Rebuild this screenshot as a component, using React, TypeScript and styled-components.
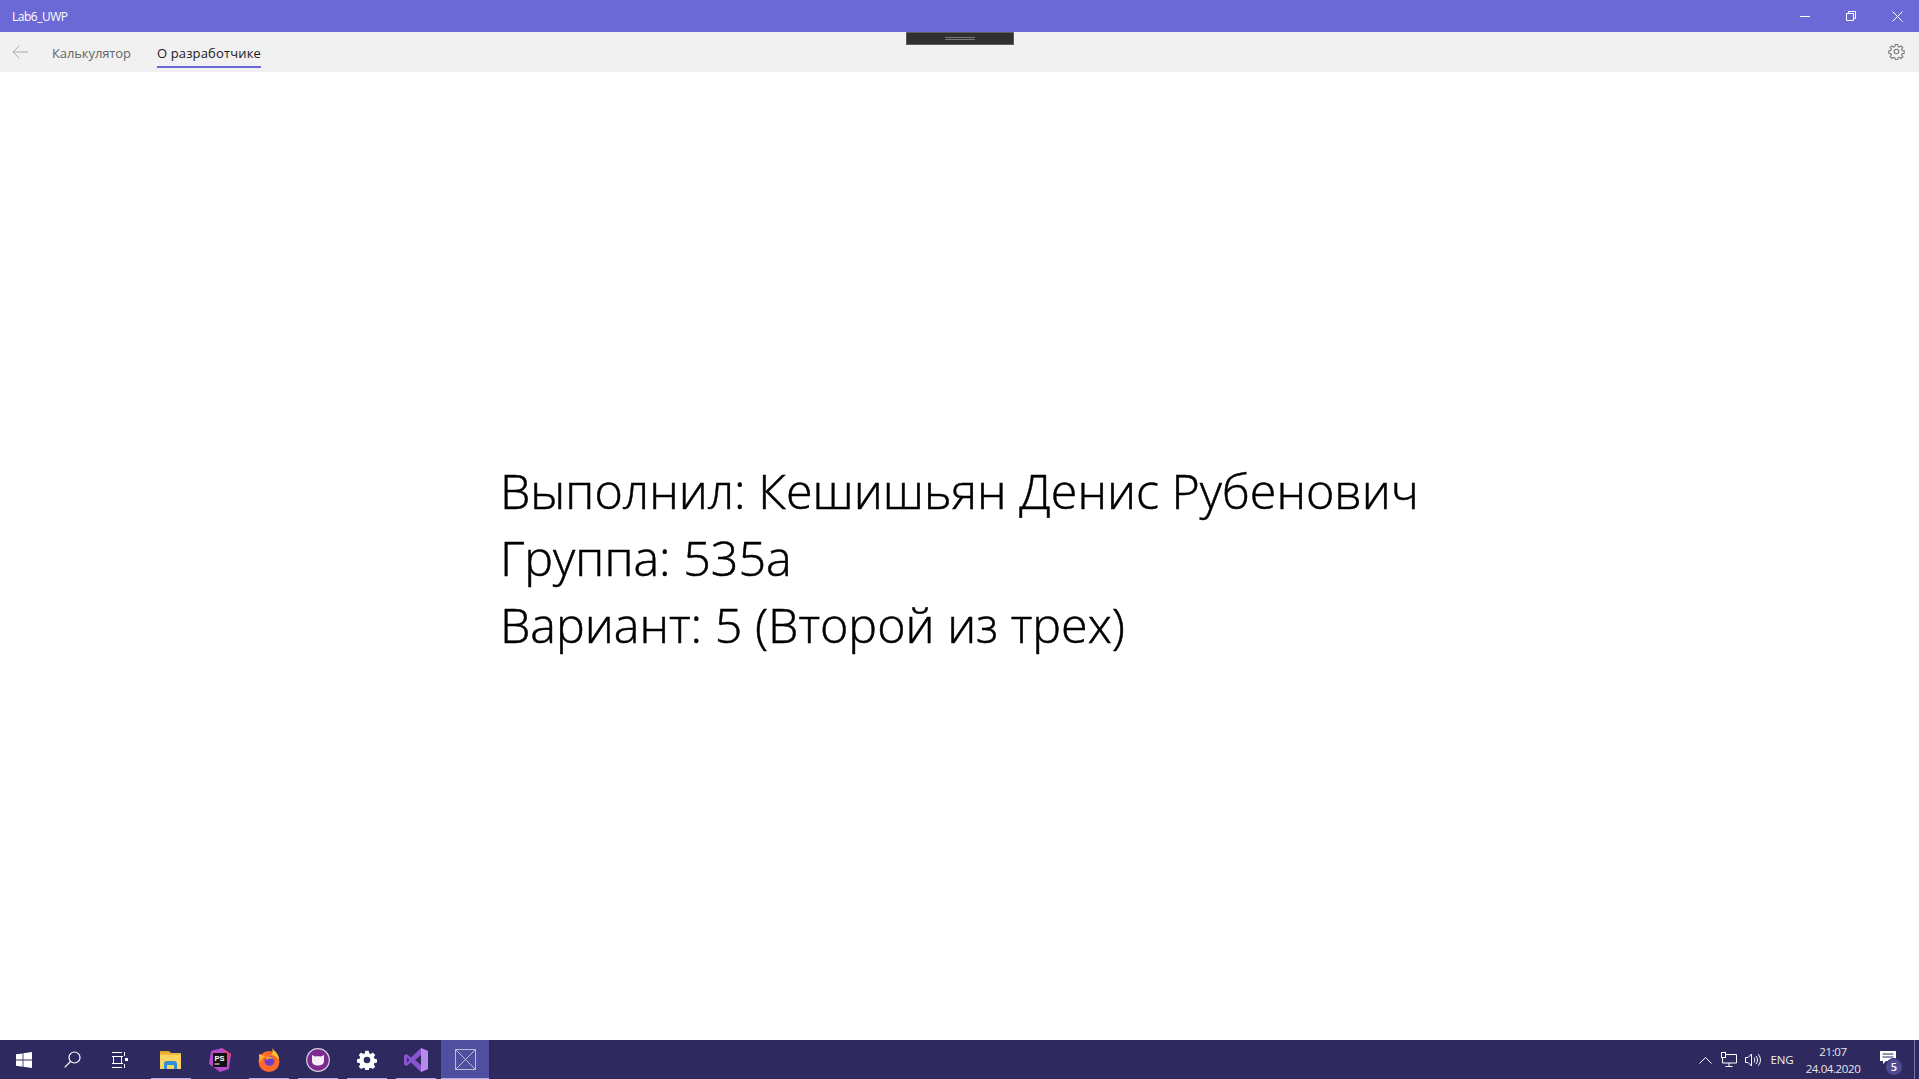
import React from 'react'
import styled, { createGlobalStyle } from 'styled-components'

const GlobalStyle = createGlobalStyle`
  html, body { margin: 0; padding: 0; height: 100%; background: #fff; overflow: hidden; }
  #root { height: 100%; }
`

const Window = styled.div`
  width: 1919px;
  height: 1079px;
  display: flex;
  flex-direction: column;
  font-family: "Open Sans", "Noto Sans", sans-serif;
`

const TitleBar = styled.div`
  height: 32px;
  flex: none;
  background: #6b69d6;
  color: #fff;
  display: flex;
  align-items: center;
  justify-content: space-between;
  padding-left: 12px;
  font-size: 12px;
  letter-spacing: -0.5px;
`

const Caption = styled.div`
  display: flex;
  height: 100%;
  margin-right: -1px;
`

const CaptionButton = styled.div`
  width: 46px;
  display: flex;
  align-items: center;
  justify-content: center;
`

const NavBar = styled.div`
  position: relative;
  height: 40px;
  flex: none;
  background: #f1f1f1;
  display: flex;
  align-items: center;
  padding: 0 14px 0 12px;
`

const BackButton = styled.div`
  width: 16px;
  height: 16px;
  margin-right: 24px;
  display: flex;
`

const NavItem = styled.div<{ $active?: boolean }>`
  height: 100%;
  box-sizing: border-box;
  margin-right: 26px;
  padding-top: 11px;
  font-size: 13px;
  letter-spacing: ${(p) => (p.$active ? '0.15px' : '-0.1px')};
  line-height: 20px;
  color: ${(p) => (p.$active ? '#1a1a1a' : '#666')};
  position: relative;
  &::after {
    content: '';
    display: ${(p) => (p.$active ? 'block' : 'none')};
    position: absolute;
    left: 0;
    right: 0;
    bottom: 4px;
    height: 2px;
    background: #6b69d6;
  }
`

const Spacer = styled.div`
  flex: 1;
`

const Settings = styled.div`
  display: flex;
  margin-top: -2px;
`

const Grip = styled.div`
  position: absolute;
  left: 906px;
  top: 0;
  width: 108px;
  height: 13px;
  box-sizing: border-box;
  background: #2f2f2f;
  border: 1px solid #5c5c5c;
  display: flex;
  flex-direction: column;
  align-items: center;
  justify-content: center;
  gap: 1px;
  &::before, &::after {
    content: '';
    width: 30px;
    height: 1px;
    background: #7a7a7a;
  }
`

const Content = styled.main`
  flex: 1;
  display: flex;
  align-items: center;
  padding-left: 500px;
  background: #fff;
`

const Info = styled.div`
  font-size: 48.4px;
  font-weight: 300;
  line-height: 67px;
  color: #000;
  -webkit-text-stroke: 0.5px #000;
  white-space: nowrap;
  margin-top: 3px;
`

const Taskbar = styled.footer`
  height: 39px;
  flex: none;
  background: #2e2a60;
  display: flex;
  color: #fff;
  font-size: 12px;
`

const TaskButton = styled.div<{ $width?: number; $pinned?: boolean; $active?: boolean; $inset?: number }>`
  width: ${(p) => p.$width ?? 49}px;
  height: 100%;
  box-sizing: border-box;
  padding-right: ${(p) => p.$inset ?? 0}px;
  position: relative;
  display: flex;
  align-items: center;
  justify-content: center;
  background: ${(p) => (p.$active ? '#504f9f' : 'transparent')};
  &::after {
    content: '';
    display: ${(p) => (p.$pinned ? 'block' : 'none')};
    position: absolute;
    left: ${(p) => (p.$active ? 0 : 4)}px;
    right: ${(p) => (p.$active ? 0 : 5)}px;
    bottom: 0;
    height: 1px;
    background: #b3b0f0;
  }
`

const Tray = styled.div`
  margin-left: auto;
  display: flex;
  align-items: center;
  height: 100%;
`

const TrayIcon = styled.div<{ $width: number }>`
  width: ${(p) => p.$width}px;
  display: flex;
  justify-content: center;
`

const Lang = styled.div`
  width: 34px;
  text-align: center;
  font-size: 11.5px;
  letter-spacing: -0.2px;
  color: #f0f0f0;
`

const Clock = styled.div`
  width: 68px;
  text-align: center;
  font-size: 11.5px;
  letter-spacing: -0.4px;
  line-height: 17px;
  color: #e8e8e8;
`

const Notify = styled.div`
  width: 47px;
  height: 100%;
  box-sizing: border-box;
  padding: 0 5px 4px 0;
  position: relative;
  display: flex;
  align-items: center;
  justify-content: center;
`

const Badge = styled.div`
  position: absolute;
  left: 18px;
  top: 18px;
  width: 16px;
  height: 16px;
  border-radius: 50%;
  background: #4b4a92;
  border: 1px solid #2e2a60;
  font-size: 11px;
  font-weight: 600;
  line-height: 16px;
  text-align: center;
  color: #fff;
`

const ShowDesktop = styled.div`
  width: 5px;
  height: 100%;
  box-sizing: border-box;
  border-left: 1px solid #77759f;
`

const App: React.FC = () => {
  return (
    <Window>
      <GlobalStyle />
      <TitleBar>
        <span>Lab6_UWP</span>
        <Caption>
          <CaptionButton>
            <svg width="10" height="10" viewBox="0 0 10 10"><path d="M0 5.5h10" stroke="#fff" fill="none" /></svg>
          </CaptionButton>
          <CaptionButton>
            <svg width="10" height="10" viewBox="0 0 10 10" fill="none" stroke="#fff"><path d="M.5 2.5h7v7h-7zM2.5 2.5v-2h7v7h-2" /></svg>
          </CaptionButton>
          <CaptionButton>
            <svg width="11" height="11" viewBox="0 0 11 11" fill="none" stroke="#fff"><path d="M.5.5l10 10M10.5.5l-10 10" /></svg>
          </CaptionButton>
        </Caption>
      </TitleBar>
      <NavBar>
        <BackButton>
          <svg width="16" height="16" viewBox="0 0 16 16" fill="none" stroke="#aaa"><path d="M16 8H1M7.5 1.5L1 8l6.500 6.500" /></svg>
        </BackButton>
        <NavItem>Калькулятор</NavItem>
        <NavItem $active>О разработчике</NavItem>
        <Spacer />
        <Settings>
          <svg width="17" height="17" viewBox="0 0 24 24" fill="none" stroke="#777" strokeWidth="1.5">
            <circle cx="12" cy="12" r="3.2" />
            <path d="M10.3 2h3.400l.5 2.900 1.900.8 2.400-1.700 2.400 2.400-1.700 2.400.8 1.900 2.900.5v3.400l-2.900.5-.8 1.900 1.700 2.400-2.400 2.400-2.400-1.700-1.900.8-.5 2.900h-3.400l-.5-2.900-1.900-.8-2.400 1.700-2.400-2.400 1.700-2.400-.8-1.900-2.900-.5v-3.400l2.900-.5.8-1.900-1.700-2.400 2.400-2.400 2.400 1.700 1.900-.8z" />
          </svg>
        </Settings>
        <Grip />
      </NavBar>
      <Content>
        <Info>
          Выполнил: Кешишьян Денис Рубенович
          <br />
          Группа: 535а
          <br />
          Вариант: 5 (Второй из трех)
        </Info>
      </Content>
      <Taskbar>
        <TaskButton $width={48}>
          <svg width="16" height="16" viewBox="0 0 16 16" fill="#fff"><path d="M0 2.300l6.600-.9v6.200H0zM7.400 1.300L16 0v7.600H7.400zM0 8.400h6.600v6.300L0 13.800zM7.400 8.400H16V16l-8.600-1.200z" /></svg>
        </TaskButton>
        <TaskButton $width={48}>
          <svg width="17" height="17" viewBox="0 0 17 17" fill="none" stroke="#fff" strokeWidth="1.200"><circle cx="10.500" cy="6.500" r="5.500" /><path d="M6.500 10.500L.7 16.300" /></svg>
        </TaskButton>
        <TaskButton $width={51} $inset={3}>
          <svg width="16" height="16" viewBox="0 0 16 16" fill="none" stroke="#fff"><path d="M0 .5h10M0 15.500h10M1.500 4.500h8v7h-8zM0 4.500h11M0 11.500h11M12.500 0v4M12.500 12v4" /><rect x="13" y="6" width="3" height="3" fill="#fff" stroke="none" /></svg>
        </TaskButton>
        <TaskButton $pinned $inset={2}>
          <svg width="22" height="20" viewBox="0 0 22 20"><path d="M0 1h9l2 2h-11z" fill="#e0a526" /><rect x="0" y="3" width="21" height="16" fill="#fcd462" /><rect x="0" y="3" width="21" height="2" fill="#e8b93f" /><path d="M4 19v-5a3 3 0 0 1 3-3h7a3 3 0 0 1 3 3v5h-3v-4H7v4z" fill="#2f8fd8" /></svg>
        </TaskButton>
        <TaskButton $inset={2}>
          <svg width="24" height="24" viewBox="0 0 24 24"><path d="M3 3l11-3 9 6-2 15-9 3L1 16z" fill="#b74ac9" /><path d="M14 0l9 6-2 6z" fill="#e8407f" /><rect x="5" y="5" width="14" height="14" fill="#111" /><text x="6.500" y="12.500" fontSize="7.500" fontWeight="700" fontFamily="Liberation Sans" fill="#fff">PS</text><rect x="6.500" y="15.500" width="5" height="1" fill="#fff" /></svg>
        </TaskButton>
        <TaskButton $pinned $inset={2}>
          <svg width="24" height="24" viewBox="0 0 24 24"><circle cx="12" cy="13.500" r="10.500" fill="#ff6a2b" /><path d="M15 0c2 3 7 5 7 12-3-4-6-5-8-5 2-2 2-4 1-7z" fill="#ffc02e" /><path d="M2 6c0 3 0 5 1 8l5-6z" fill="#ffb02e" /><circle cx="12.500" cy="13" r="5" fill="#6a3fc9" /><path d="M8 9c4-2 8 0 9 3-2-2-5-2-7 0z" fill="#ff9a2e" /></svg>
        </TaskButton>
        <TaskButton $pinned $inset={2}>
          <svg width="24" height="24" viewBox="0 0 24 24"><circle cx="12" cy="12" r="11.300" fill="#7d2a90" stroke="#d9d3de" strokeWidth="1.200" /><path d="M6 7l3 1.600c2-.5 4-.5 6 0L18 7v6c0 3-2.500 4.500-6 4.500S6 16 6 13z" fill="#f4eef6" /></svg>
        </TaskButton>
        <TaskButton $pinned $inset={2}>
          <svg width="20" height="20" viewBox="0 0 24 24" fill="#fff"><path fillRule="evenodd" d="M10 1h4l.6 3 1.900.8 2.600-1.700 2.800 2.800-1.700 2.600.8 1.900 3 .6v4l-3 .6-.8 1.900 1.700 2.600-2.800 2.800-2.600-1.700-1.900.8-.6 3h-4l-.6-3-1.900-.8-2.600 1.700-2.800-2.800 1.700-2.600-.8-1.900-3-.6v-4l3-.6.8-1.900-1.700-2.600 2.800-2.800 2.600 1.700 1.900-.8zM12 8a4 4 0 1 0 0 8 4 4 0 0 0 0-8z" /></svg>
        </TaskButton>
        <TaskButton $pinned $inset={2}>
          <svg width="24" height="24" viewBox="0 0 24 24"><path d="M17 0l7 3v18l-7 3-10-9.500-4.500 3.500L0 16.500v-9L2.500 6 7 9.500z" fill="#8a55d0" /><path d="M17 0l7 3v18l-7 3z" fill="#b68ae8" /><path d="M17 7l-6 5 6 5z" fill="#2e2a60" /><path d="M3 9.500v5l2.500-2.500z" fill="#2e2a60" /></svg>
        </TaskButton>
        <TaskButton $active $pinned $width={48}>
          <svg width="21" height="21" viewBox="0 0 21 21" fill="none" stroke="#bdbdd0"><path d="M.5.500h20v20H.5zM.5.500l20 20M20.500.500l-20 20" /></svg>
        </TaskButton>
        <Tray>
          <TrayIcon $width={22}>
            <svg width="13" height="8" viewBox="0 0 13 8" fill="none" stroke="#fff"><path d="M.5 7.500l6-6 6 6" /></svg>
          </TrayIcon>
          <TrayIcon $width={25}>
            <svg width="16" height="15" viewBox="0 0 16 15" fill="none" stroke="#fff"><path d="M5 2.500h10.500v8.500H1.500V6M8 11v3M4.500 14.500h7" /><rect x=".5" y=".5" width="4" height="5" fill="#2e2a60" /></svg>
          </TrayIcon>
          <TrayIcon $width={24}>
            <svg width="16" height="14" viewBox="0 0 16 14" fill="none" stroke="#fff"><path d="M.5 4.500h2.500L6.500 1v12L3 9.500H.500zM9 4.500c1 1.500 1 3.500 0 5M11 3c2 2.500 2 5.500 0 8M13.200 1.200c3 3.500 3 8 0 11.600" /></svg>
          </TrayIcon>
          <Lang>ENG</Lang>
          <Clock>21:07<br />24.04.2020</Clock>
          <Notify>
            <svg width="16" height="14" viewBox="0 0 16 14" fill="#fff"><path d="M0 0h16v10H6l-3 3v-3H0z" /><path d="M2.500 3h11M2.500 6h11" stroke="#2e2a60" /></svg>
            <Badge>5</Badge>
          </Notify>
          <ShowDesktop />
        </Tray>
      </Taskbar>
    </Window>
  )
}

export default App
